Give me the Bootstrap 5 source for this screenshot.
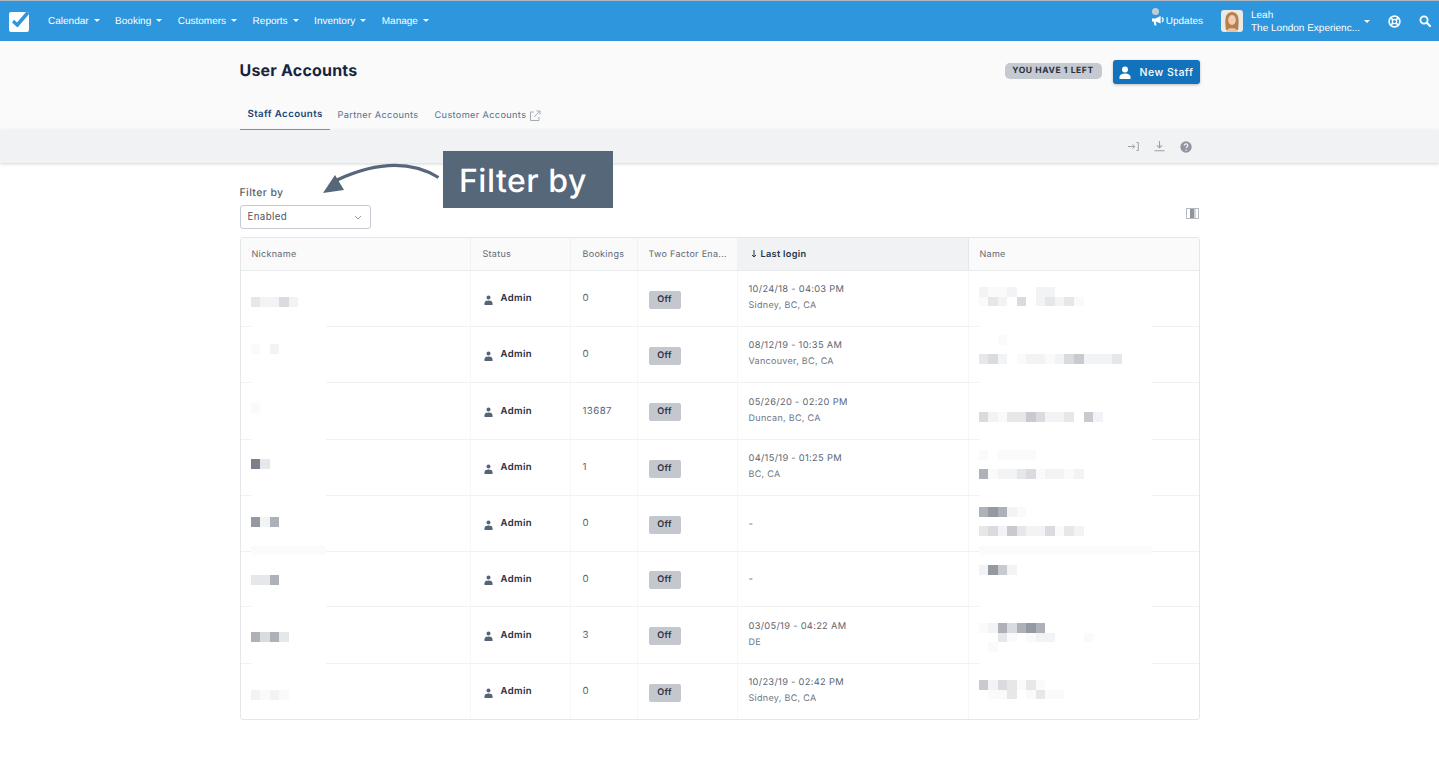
<!DOCTYPE html>
<html lang="en">
<head>
<meta charset="utf-8">
<title>User Accounts</title>
<link href="https://cdn.jsdelivr.net/npm/bootstrap@5.3.0/dist/css/bootstrap.min.css" rel="stylesheet">
<style>
html,body{height:766px;overflow:hidden;background:#fff}
body{font-family:Inter,"Liberation Sans",sans-serif;font-size:10px;color:#5c6675;position:relative;text-rendering:geometricPrecision}
.topbar{height:41px;background:#2d96dd;border-top:1px solid #aeb9c2;padding:0 0 0 9px;flex-wrap:nowrap}
.topbar .navbar-brand{padding:0;margin:0 17px 0 0;line-height:0}
.topbar .nav-link{color:#fff;font-family:"Liberation Sans",sans-serif;font-size:10px;padding:0}
.topbar .dropdown-toggle::after{margin-left:5px;vertical-align:.12em;border-top-width:3px;border-right-width:3px;border-left-width:3px}
.menu-gap{gap:15.5px;list-style:none;margin:0;padding:0}
.upd{position:relative;color:#fff;font-family:"Liberation Sans",sans-serif;font-size:10px;margin-left:auto;width:51px;gap:2px}
.upd-dot{position:absolute;left:0;top:-6px;width:7px;height:7px;border-radius:50%;background:#c3ccd3}
.user-box{color:#fff;font-family:"Liberation Sans",sans-serif;font-size:10px;line-height:13px;margin-left:18px;width:149px}
.avatar{border-radius:3px;flex:none;margin-right:8px}
.user-name{width:107px;white-space:nowrap;padding-top:2px}
.caret-w{width:0;height:0;border:3px solid transparent;border-top-color:#fff;margin-top:3px;margin-left:6px}
.glob{margin-left:18px}
.find{margin-left:18px;margin-right:8px}
.head-band{height:89px;background:#fafafa}
.wrap-960{width:960px;margin:0 auto}
.head-row{height:60px;padding-top:19px}
.page-title{font-size:16px;font-weight:700;color:#18243c;margin:0;letter-spacing:.2px;line-height:20px}
.left-pill{background:#c5c9d0;color:#29303c;font-size:8.5px;font-weight:700;letter-spacing:.6px;border-radius:5px;height:16px;width:97px;padding:0;line-height:17px;text-align:center;margin-right:11px;margin-top:3px}
.new-btn{background:#1272bb;border:0;color:#fff;font-size:10.5px;font-weight:500;letter-spacing:.5px;width:87px;height:24px;border-radius:3px;padding:1px 0 0;box-shadow:0 1px 3px rgba(0,0,0,.25);gap:9px;margin-top:0}
.tabs-row{gap:0;height:29px;border:0}
.tabs-row .nav-link{font-size:9.2px;letter-spacing:.35px;color:#55718f;padding:1px 8px 0;height:29px;border-radius:0;margin-right:0;gap:3px;display:flex;align-items:center;white-space:nowrap}
.tabs-row .nav-link.active{color:#1b4577;font-weight:600;font-size:9.7px;letter-spacing:.4px;border-bottom:1px solid #5f9bd8;width:90px}
.tool-band{height:33px;background:#f1f2f4;box-shadow:0 1px 3px rgba(60,70,90,.22);position:relative}
.tool-icons{height:33px;gap:15px;padding-right:8px}
.callout{position:absolute;left:443px;top:151px;width:170px;height:57px;background:#56677a;color:#fff;font-family:Inter,sans-serif;font-weight:500;font-size:32px;line-height:59px;padding-left:16px;z-index:3;letter-spacing:.5px;white-space:nowrap}
.arrow-over{position:absolute;left:318px;top:158px;z-index:3}
.filter-row{padding-top:23px;height:74px}
.filter-lbl{font-size:10.5px;letter-spacing:.4px;color:#59626f;font-weight:500;line-height:14px;margin-bottom:5px}
.filter-sel{width:131px;height:24px;font-size:9.7px;letter-spacing:.4px;color:#4c5563;padding:0 20px 0 7px;border:1px solid #c6cad2;border-radius:3px;background-image:url("data:image/svg+xml,%3csvg xmlns='http://www.w3.org/2000/svg' viewBox='0 0 8 5'%3e%3cpath fill='none' stroke='%23999ea6' d='M1 1l3 3 3-3'/%3e%3c/svg%3e");background-size:8px 5px;background-position:right 8px center;font-family:Inter,sans-serif;background-color:#fff}
.cols-ic{margin-top:22px;margin-right:1px}
.grid-box{border:1px solid #e4e6e9;border-radius:3px;overflow:hidden;background:#fff}
.acct{width:958px;table-layout:fixed;border-collapse:separate;border-spacing:0;margin:0}
.acct th{height:33px;background:#fafafa;font-weight:400;font-size:9px;letter-spacing:.3px;color:#5e6875;padding:2px 11px 0;border-bottom:1px solid #e8eaec;border-right:1px solid #f0f1f2;white-space:nowrap;overflow:hidden;vertical-align:middle}
.acct th:last-child,.acct td:last-child{border-right:0}
.acct th:nth-child(2),.acct th:nth-child(3),.acct td:nth-child(3){padding-left:12px}
.acct th.sorted{background:#f1f2f4;color:#24324a;font-weight:600;font-size:9.2px;padding-left:13px;border-right:1px solid #e4e6e9}
.sort-ar{margin-right:4px;vertical-align:-1px}
.acct td{padding:0 11px;border-bottom:1px solid #f0f1f3;border-right:1px solid #f6f7f8;vertical-align:middle;color:#5c6675;font-size:9.7px;letter-spacing:.4px;position:relative}
.acct tr:last-child td{border-bottom:0}
.acct td.topcell{vertical-align:top;padding:0 0 0 10px}
.acct td.ctr{padding-top:2px}
.acct td.statc{padding-left:13px}
.r56 td{height:56px}.r57 td{height:57px}.r55 td{height:55px}
.acct td.topcell::after{content:"";position:absolute;left:10px;bottom:-2px;height:4px;background:#fff;z-index:1}
.acct td.nickc::after{width:75px}
.acct td.namec::after{width:173px}
.acct tr.lastr td.topcell::after{display:none}
.acct tr.greyp td.topcell::after{bottom:-4px;height:9px;background:#fbfbfb}
.role{color:#1e2a40;font-weight:600;font-size:9.5px;letter-spacing:.4px;gap:8px}
.off-pill{display:inline-block;background:#c4c7ce;color:#2a3140;font-size:9px;font-weight:600;letter-spacing:.4px;border-radius:2px;width:32px;height:18px;line-height:18px;text-align:center;padding:0}
.two-l{line-height:16px;padding-bottom:1px;font-size:9.3px;letter-spacing:.3px}
.two-l .place{color:#6d7581;font-size:9px;letter-spacing:.3px}
.dash{padding-top:3px}
.mos{position:relative;z-index:2;display:block}
.mos-row{display:flex;height:9.5px}
.mos-row i{display:block;width:9.56px;height:9.5px;flex:none}
.s0{background:transparent}.s1{background:#fafafa}.s2{background:#f2f3f5}.s3{background:#e6e7e9}.s4{background:#dadbdf}.s5{background:#c8cacf}.s6{background:#aeb1b8}.s7{background:#9599a2}.s8{background:#7c808a}
</style>
</head>
<body>
<nav class="navbar topbar d-flex align-items-center">
  <a class="navbar-brand" href="#">
    <svg width="22" height="22" viewBox="0 0 22 22"><rect x="0" y="2" width="20" height="20" rx="2" fill="#fff"/><path d="M3 12.500l5.500 5L20.500 3.500 17.500 1.500 8 12.500 5 9.800z" fill="#2d96dd"/></svg>
  </a>
  <ul class="d-flex menu-gap">
    <li class="nav-item"><a class="nav-link dropdown-toggle" href="#">Calendar</a></li>
    <li class="nav-item"><a class="nav-link dropdown-toggle" href="#">Booking</a></li>
    <li class="nav-item"><a class="nav-link dropdown-toggle" href="#">Customers</a></li>
    <li class="nav-item"><a class="nav-link dropdown-toggle" href="#">Reports</a></li>
    <li class="nav-item"><a class="nav-link dropdown-toggle" href="#">Inventory</a></li>
    <li class="nav-item"><a class="nav-link dropdown-toggle" href="#">Manage</a></li>
  </ul>
  <div class="upd d-flex align-items-center">
    <span class="upd-dot"></span>
    <svg width="12" height="10" viewBox="0 0 12 10"><path d="M0 2.500h3.500L8.800 0v7.500L3.800 5.500l.8 4H2.600L1.700 5.500H0z" fill="#fff"/><path d="M10 1.500a2.500 2.500 0 0 1 0 4.500" stroke="#fff" fill="none" stroke-width="1.300"/></svg>
    <span>Updates</span>
  </div>
  <div class="user-box d-flex align-items-center">
    <svg class="avatar" width="22" height="22" viewBox="0 0 22 22"><rect width="22" height="22" fill="#ece8e2"/><path d="M5 20c-1-7-1-13 1-15.500 2-3.500 8-3.500 10 0 2 2.500 2 8.500 1 15.500z" fill="#b97f4c"/><ellipse cx="11" cy="10" rx="3.800" ry="5" fill="#f1cdb2"/><path d="M5 22c1-3 3-4 6-4s5 1 6 4z" fill="#e8c3a6"/></svg>
    <div class="user-name"><div>Leah</div><div>The London Experienc...</div></div>
    <span class="caret-w"></span>
  </div>
  <svg class="glob" width="13" height="13" viewBox="0 0 13 13"><circle cx="6.500" cy="6.500" r="5.400" fill="none" stroke="#fff" stroke-width="1.600"/><circle cx="6.500" cy="6.500" r="2.200" fill="none" stroke="#fff" stroke-width="1.200"/><path d="M2.600 2.600l2.300 2.300M10.400 2.600L8.100 4.900M2.600 10.400l2.300-2.300M10.400 10.400L8.100 8.100" stroke="#fff" stroke-width="1.600"/></svg>
  <svg class="find" width="12" height="12" viewBox="0 0 12 12"><circle cx="5" cy="5" r="3.600" fill="none" stroke="#fff" stroke-width="1.800"/><path d="M7.800 7.800L11 11" stroke="#fff" stroke-width="2.200" stroke-linecap="round"/></svg>
</nav>

<header class="head-band">
  <div class="wrap-960">
    <div class="head-row d-flex justify-content-between align-items-start">
      <h1 class="page-title">User Accounts</h1>
      <div class="d-flex align-items-start">
        <span class="left-pill">YOU HAVE 1 LEFT</span>
        <button class="btn new-btn d-flex align-items-center justify-content-center">
          <svg width="12" height="13" viewBox="0 0 12 13"><circle cx="6" cy="3.400" r="3" fill="#fff"/><path d="M.5 13v-2c0-2.400 2.400-3.600 5.500-3.600s5.500 1.200 5.500 3.600v2z" fill="#fff"/></svg>
          <span>New Staff</span>
        </button>
      </div>
    </div>
    <ul class="nav tabs-row">
      <li class="nav-item"><a class="nav-link active" href="#">Staff Accounts</a></li>
      <li class="nav-item"><a class="nav-link" href="#">Partner Accounts</a></li>
      <li class="nav-item"><a class="nav-link" href="#">Customer Accounts
        <svg width="12" height="12" viewBox="0 0 12 12"><path d="M5 2H1.500v8.500H10V7" fill="none" stroke="#a5abb4" stroke-width="1"/><path d="M5 7l6-6M7.500 1H11v3.500" fill="none" stroke="#a5abb4" stroke-width="1"/></svg></a></li>
    </ul>
  </div>
</header>

<div class="tool-band">
  <div class="wrap-960 tool-icons d-flex justify-content-end align-items-center">
    <svg width="11" height="9" viewBox="0 0 11 9"><path d="M0 4.500h6.500M4.500 2.300l2.200 2.200-2.200 2.200M8.500 .5h1.800v8H8.500" fill="none" stroke="#9aa1ab" stroke-width="1"/></svg>
    <svg width="11" height="11" viewBox="0 0 11 11"><path d="M5.500 0v6.500M3 4.300l2.500 2.500L8 4.300M.5 9.800h10" fill="none" stroke="#9aa1ab" stroke-width="1.100"/></svg>
    <svg width="12" height="12" viewBox="0 0 12 12"><circle cx="6" cy="6" r="5.700" fill="#8f96a1"/><path d="M4.300 4.600c0-2.200 3.500-2.200 3.500 0 0 1.300-1.700 1.300-1.700 2.500" fill="none" stroke="#f1f2f4" stroke-width="1.300"/><circle cx="6.100" cy="9" r=".8" fill="#f1f2f4"/></svg>
  </div>
</div>

<div class="callout">Filter by</div>
<svg class="arrow-over" width="126" height="38" viewBox="0 0 126 38"><path d="M120.500 19.500C92 2 58 4 19 22" fill="none" stroke="#56677a" stroke-width="3.200"/><path d="M5 35l12-18 9 15z" fill="#56677a"/></svg>

<main class="wrap-960">
  <div class="filter-row d-flex justify-content-between align-items-start">
    <div>
      <div class="filter-lbl">Filter by</div>
      <select class="form-select filter-sel"><option>Enabled</option></select>
    </div>
    <svg class="cols-ic" width="13" height="11" viewBox="0 0 13 11"><rect x=".5" y=".5" width="12" height="10" fill="#fff" stroke="#b5b9c0"/><rect x="4" y="1" width="4.500" height="9" fill="#8f949d"/><rect x="8.500" y="1" width="1.500" height="9" fill="#d5d7db"/></svg>
  </div>

  <div class="grid-box">
    <table class="acct">
      <colgroup><col style="width:230px"><col style="width:100px"><col style="width:67px"><col style="width:100px"><col style="width:231px"><col style="width:230px"></colgroup>
      <thead><tr>
        <th>Nickname</th><th>Status</th><th>Bookings</th><th>Two Factor Ena...</th>
        <th class="sorted"><svg class="sort-ar" width="6" height="8" viewBox="0 0 6 8"><path d="M3 0v7M1 5l2 2 2-2" fill="none" stroke="#24324a" stroke-width="1"/></svg>Last login</th><th>Name</th>
      </tr></thead>
      <tbody id="rows"></tbody>
    </table>
  </div>
</main>

<script>
var person='<svg width="9" height="10" viewBox="0 0 9 10"><circle cx="4.500" cy="2.400" r="2" fill="#56647a"/><path d="M.5 10V8.200C.5 6.300 2.300 5.600 4.500 5.600s4 .7 4 2.600V10z" fill="#56647a"/></svg>';
var data=[
 {h:56,b:'0',d:'10/24/18 - 04:03 PM',p:'Sidney, BC, CA',nt:26,n:['32242'],mt:16,m:['21120022','13204023231']},
 {h:56,b:'0',d:'08/12/19 - 10:35 AM',p:'Vancouver, BC, CA',nt:17,n:['102'],mt:8,m:['001','','342012212452223']},
 {h:57,b:'13687',d:'05/26/20 - 02:20 PM',p:'Duncan, BC, CA',nt:20,n:['1'],mt:29,m:['4213354223052']},
 {h:56,b:'1',d:'04/15/19 - 01:25 PM',p:'BC, CA',nt:19,n:['83'],mt:10,m:['10111100','','61223412212']},
 {h:56,b:'0',d:'-',p:'',nt:21,n:['726'],mt:11,m:['67621','','34253224132'],grey:1},
 {h:55,b:'0',d:'-',p:'',nt:23,n:['336'],mt:13,m:['2752']},
 {h:57,b:'3',d:'03/05/19 - 04:22 AM',p:'DE',nt:25,n:['6463'],mt:16,m:['1264676','003101220001','01']},
 {h:55,b:'0',d:'10/23/19 - 02:42 PM',p:'Sidney, BC, CA',nt:26,n:['2121'],mt:16,m:['5243131','011301311']}
];
function mos(rows,top){
  var h='<div class="mos" style="margin-top:'+top+'px">';
  rows.forEach(function(r){h+='<div class="mos-row">';r.split('').forEach(function(c){h+='<i class="s'+c+'"></i>'});h+='</div>'});
  return h+'</div>';
}
var html='';
data.forEach(function(r,i){
  var last=r.p?'<div class="two-l"><div>'+r.d+'</div><div class="place">'+r.p+'</div></div>':'<div class="dash">-</div>';
  var cls='r'+r.h+(i==data.length-1?' lastr':'')+(r.grey?' greyp':'');
  html+='<tr class="'+cls+'"><td class="topcell nickc">'+mos(r.n,r.nt)+'</td>'+
   '<td class="ctr statc"><div class="role d-flex align-items-center">'+person+'<span>Admin</span></div></td>'+
   '<td class="ctr">'+r.b+'</td>'+
   '<td class="ctr"><span class="off-pill">Off</span></td>'+
   '<td>'+last+'</td>'+
   '<td class="topcell namec">'+mos(r.m,r.mt)+'</td></tr>';
});
document.getElementById('rows').innerHTML=html;
</script>
<script src="https://cdn.jsdelivr.net/npm/bootstrap@5.3.0/dist/js/bootstrap.bundle.min.js"></script>
</body>
</html>
